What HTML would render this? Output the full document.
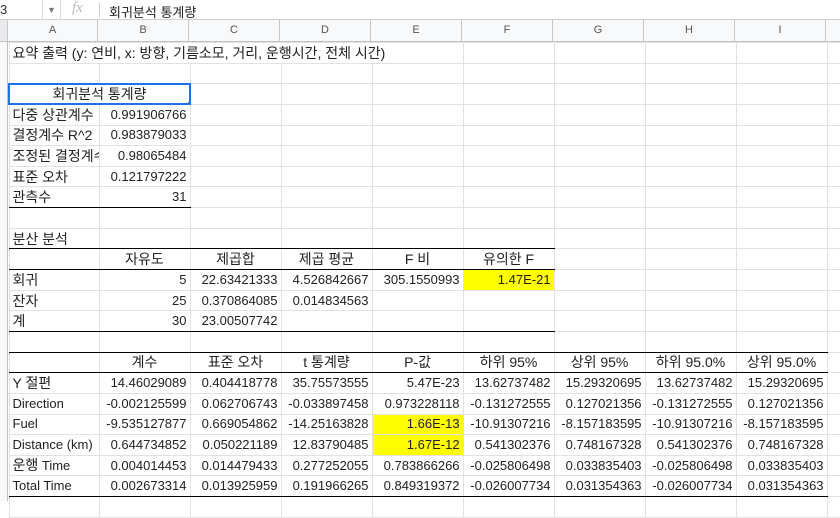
<!DOCTYPE html>
<html><head><meta charset="utf-8"><style>
*{box-sizing:border-box;margin:0;padding:0}
body{width:840px;height:501px;overflow:hidden;background:#fff;font-family:"Liberation Sans","Noto Sans CJK KR",sans-serif;font-size:13px;color:#222;position:relative}
#bar{position:absolute;left:0;top:0;width:840px;height:20px;border-bottom:1px solid #d0d0d0;background:#fff}
#bar span{position:absolute;top:2px}
#ch{position:absolute;left:0;top:20px;height:22px;width:840px;background:#f8f9fa;border-bottom:1px solid #c0c0c0}
#ch div{position:absolute;top:0;height:21px;line-height:21px;text-align:center;color:#555;font-size:11px;border-right:1px solid #c8c8c8}
#rh{position:absolute;left:0;top:42px;width:8px;height:459px;background:#f8f9fa;border-right:1px solid #c0c0c0}
table{position:absolute;left:8px;top:42px;border-collapse:collapse;table-layout:fixed;width:838px}
tr{height:20.65px}
td{border:1px solid #e2e2e2;white-space:nowrap;overflow:hidden;padding:0 3px;line-height:18px;text-align:right}
td.l{text-align:left}
td.c{text-align:center}
td.ov{overflow:visible}
.h{font-size:14px}
.y{background:#ffff00}
tr.bb td.k{border-bottom:1px solid #000}
</style></head><body>
<div id="bar"><span style="left:0;color:#333">3</span><span style="left:42px;top:0;height:20px;border-left:1px solid #ddd"></span><span style="left:47px;font-size:9px;top:5px;color:#777">▼</span><span style="left:60px;top:0;height:20px;border-left:1px solid #ddd"></span><span style="left:72px;color:#bbb;font-style:italic;font-family:'Liberation Serif',serif;font-size:15px;top:0">fx</span><span style="left:99px;top:3px;height:14px;border-left:1px solid #ccc"></span><span style="left:109px;font-size:13px">회귀분석 통계량</span></div>
<div id="ch">
<div style="left:8px;width:90px">A</div><div style="left:98px;width:91px">B</div><div style="left:189px;width:91px">C</div><div style="left:280px;width:91px">D</div><div style="left:371px;width:91px">E</div><div style="left:462px;width:91px">F</div><div style="left:553px;width:91px">G</div><div style="left:644px;width:91px">H</div><div style="left:735px;width:91px">I</div>
<div style="left:0;width:8px;background:#e8eaed"></div>
</div>
<div id="rh"></div>
<table>
<colgroup><col style="width:90px"><col style="width:91px"><col style="width:91px"><col style="width:91px"><col style="width:91px"><col style="width:91px"><col style="width:91px"><col style="width:91px"><col style="width:91px"><col style="width:20px"></colgroup>
<tr><td class="l ov h" colspan="5">요약 출력 (y: 연비, x: 방향, 기름소모, 거리, 운행시간, 전체 시간)</td><td></td><td></td><td></td><td></td><td></td></tr>
<tr><td></td><td></td><td></td><td></td><td></td><td></td><td></td><td></td><td></td><td></td></tr>
<tr><td class="c h" colspan="2" style="border:2px solid #1a73e8;position:relative">회귀분석 통계량<span style="position:absolute;right:-4px;bottom:-4px;width:6px;height:6px;background:#1a73e8;border:1px solid #fff"></span></td><td></td><td></td><td></td><td></td><td></td><td></td><td></td><td></td></tr>
<tr><td class="l h">다중 상관계수</td><td>0.991906766</td><td></td><td></td><td></td><td></td><td></td><td></td><td></td><td></td></tr>
<tr><td class="l h">결정계수 R^2</td><td>0.983879033</td><td></td><td></td><td></td><td></td><td></td><td></td><td></td><td></td></tr>
<tr><td class="l h">조정된 결정계수</td><td>0.98065484</td><td></td><td></td><td></td><td></td><td></td><td></td><td></td><td></td></tr>
<tr><td class="l h">표준 오차</td><td>0.121797222</td><td></td><td></td><td></td><td></td><td></td><td></td><td></td><td></td></tr>
<tr class="bb"><td class="l k h">관측수</td><td class="k">31</td><td></td><td></td><td></td><td></td><td></td><td></td><td></td><td></td></tr>
<tr><td></td><td></td><td></td><td></td><td></td><td></td><td></td><td></td><td></td><td></td></tr>
<tr class="bb"><td class="l k h">분산 분석</td><td class="k"></td><td class="k"></td><td class="k"></td><td class="k"></td><td class="k"></td><td></td><td></td><td></td><td></td></tr>
<tr class="bb"><td class="k"></td><td class="c k h">자유도</td><td class="c k h">제곱합</td><td class="c k h">제곱 평균</td><td class="c k h">F 비</td><td class="c k h">유의한 F</td><td></td><td></td><td></td><td></td></tr>
<tr><td class="l h">회귀</td><td>5</td><td>22.63421333</td><td>4.526842667</td><td>305.1550993</td><td class="y">1.47E-21</td><td></td><td></td><td></td><td></td></tr>
<tr><td class="l h">잔자</td><td>25</td><td>0.370864085</td><td>0.014834563</td><td></td><td></td><td></td><td></td><td></td><td></td></tr>
<tr class="bb"><td class="l k h">계</td><td class="k">30</td><td class="k">23.00507742</td><td class="k"></td><td class="k"></td><td class="k"></td><td></td><td></td><td></td><td></td></tr>
<tr class="bb"><td class="k"></td><td class="k"></td><td class="k"></td><td class="k"></td><td class="k"></td><td class="k"></td><td class="k"></td><td class="k"></td><td class="k"></td><td></td></tr>
<tr class="bb"><td class="k"></td><td class="c k h">계수</td><td class="c k h">표준 오차</td><td class="c k h">t 통계량</td><td class="c k h">P-값</td><td class="c k h">하위 95%</td><td class="c k h">상위 95%</td><td class="c k h">하위 95.0%</td><td class="c k h">상위 95.0%</td><td></td></tr>
<tr><td class="l"><span class="h">Y 절편</span></td><td>14.46029089</td><td>0.404418778</td><td>35.75573555</td><td>5.47E-23</td><td>13.62737482</td><td>15.29320695</td><td>13.62737482</td><td>15.29320695</td><td></td></tr>
<tr><td class="l">Direction</td><td>-0.002125599</td><td>0.062706743</td><td>-0.033897458</td><td>0.973228118</td><td>-0.131272555</td><td>0.127021356</td><td>-0.131272555</td><td>0.127021356</td><td></td></tr>
<tr><td class="l">Fuel</td><td>-9.535127877</td><td>0.669054862</td><td>-14.25163828</td><td class="y">1.66E-13</td><td>-10.91307216</td><td>-8.157183595</td><td>-10.91307216</td><td>-8.157183595</td><td></td></tr>
<tr><td class="l">Distance (km)</td><td>0.644734852</td><td>0.050221189</td><td>12.83790485</td><td class="y">1.67E-12</td><td>0.541302376</td><td>0.748167328</td><td>0.541302376</td><td>0.748167328</td><td></td></tr>
<tr><td class="l"><span class="h">운행</span> Time</td><td>0.004014453</td><td>0.014479433</td><td>0.277252055</td><td>0.783866266</td><td>-0.025806498</td><td>0.033835403</td><td>-0.025806498</td><td>0.033835403</td><td></td></tr>
<tr class="bb"><td class="l k">Total Time</td><td class="k">0.002673314</td><td class="k">0.013925959</td><td class="k">0.191966265</td><td class="k">0.849319372</td><td class="k">-0.026007734</td><td class="k">0.031354363</td><td class="k">-0.026007734</td><td class="k">0.031354363</td><td></td></tr>
<tr><td></td><td></td><td></td><td></td><td></td><td></td><td></td><td></td><td></td><td></td></tr>
</table>
</body></html>
